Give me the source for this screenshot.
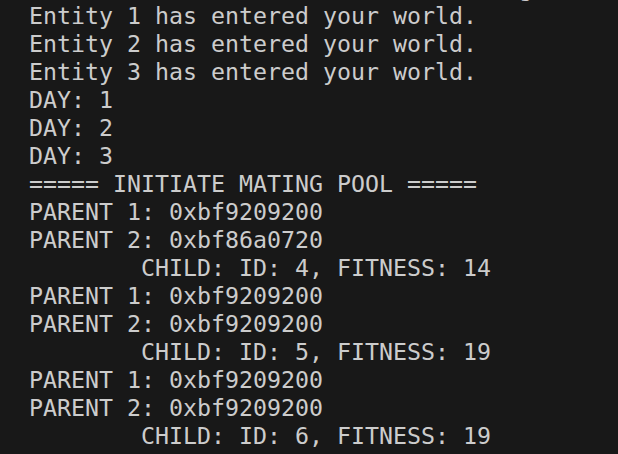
const lines = [
  "Welcome to the evolution simulator game, ready",
  "Entity 1 has entered your world.",
  "Entity 2 has entered your world.",
  "Entity 3 has entered your world.",
  "DAY: 1",
  "DAY: 2",
  "DAY: 3",
  "===== INITIATE MATING POOL =====",
  "PARENT 1: 0xbf9209200",
  "PARENT 2: 0xbf86a0720",
  "        CHILD: ID: 4, FITNESS: 14",
  "PARENT 1: 0xbf9209200",
  "PARENT 2: 0xbf9209200",
  "        CHILD: ID: 5, FITNESS: 19",
  "PARENT 1: 0xbf9209200",
  "PARENT 2: 0xbf9209200",
  "        CHILD: ID: 6, FITNESS: 19",
];

export default function App() {
  return (
    <div className="h-[454px] w-[618px] overflow-hidden bg-[#181818] pl-[29px] font-['DejaVu_Sans_Mono',monospace] text-[23.25px] leading-[28px] text-[#cccccc]">
      <div className="-mt-[26px]">
        {lines.map((line, i) => (
          <div key={i} className="whitespace-pre">
            {line}
          </div>
        ))}
      </div>
    </div>
  );
}
